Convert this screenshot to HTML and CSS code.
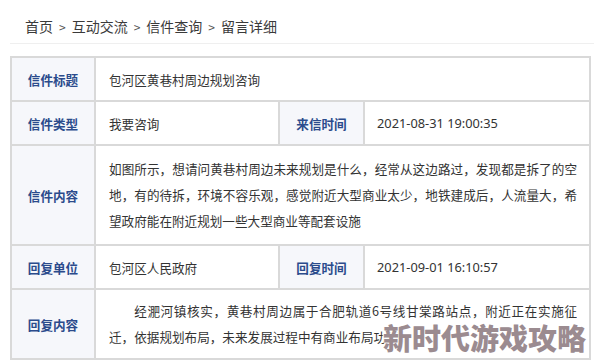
FILE: index.html
```html
<!DOCTYPE html>
<html lang="zh-CN">
<head>
<meta charset="utf-8">
<title>留言详细</title>
<link rel="stylesheet" href="styles.css">
</head>
<body>
<div class="page">
  <nav class="crumbs">
    <span>首页</span><span class="sep">&gt;</span><span>互动交流</span><span class="sep">&gt;</span><span>信件查询</span><span class="sep">&gt;</span><span>留言详细</span>
  </nav>
  <div class="sheet">
    <div class="label">信件标题</div>
    <div class="value span3">包河区黄巷村周边规划咨询</div>

    <div class="label">信件类型</div>
    <div class="value">我要咨询</div>
    <div class="label">来信时间</div>
    <div class="value date">2021-08-31 19:00:35</div>

    <div class="label">信件内容</div>
    <div class="value span3 para">如图所示，想请问黄巷村周边未来规划是什么，经常从这边路过，发现都是拆了的空地，有的待拆，环境不容乐观，感觉附近大型商业太少，地铁建成后，人流量大，希望政府能在附近规划一些大型商业等配套设施</div>

    <div class="label">回复单位</div>
    <div class="value">包河区人民政府</div>
    <div class="label">回复时间</div>
    <div class="value date">2021-09-01 16:10:57</div>

    <div class="label">回复内容</div>
    <div class="value span3 para reply">
      <p class="reply-text">经淝河镇核实，黄巷村周边属于合肥轨道6号线甘棠路站点，附近正在实施征迁，依据规划布局，未来发展过程中有商业布局功能。</p>
      <div class="watermark">新时代游戏攻略</div>
    </div>
  </div>
</div>
</body>
</html>
```
FILE: styles.css
```css
* { box-sizing: border-box; }

html, body {
  margin: 0;
  padding: 0;
  background: #ffffff;
  overflow: hidden;
}

body {
  font-family: "Noto Sans CJK SC", "Noto Sans", sans-serif;
  color: #333333;
}

.page {
  padding-left: 10px;
}

.crumbs {
  height: 44px;
  padding: 16px 0 0 15px;
  font-size: 14px;
  line-height: 20px;
  color: #3a3a3a;
  border-bottom: 1px solid #efefef;
  white-space: nowrap;
}

.crumbs .sep {
  display: inline-block;
  margin: 0 6px;
  color: #555555;
  font-size: 12px;
}

.sheet {
  margin-top: 12px;
  width: 581px;
  display: grid;
  grid-template-columns: 82px 182px 83px 224px;
  grid-template-rows: 42px 42px 98px 42px 68px;
  gap: 2px;
  padding: 2px;
  background: #d9d9d9;
}

.label {
  background: #f6f7fb;
  color: #2b4b8c;
  font-weight: 700;
  font-size: 12.6px;
  display: flex;
  align-items: center;
  justify-content: center;
}

.value {
  background: #ffffff;
  font-size: 12.6px;
  color: #333333;
  display: flex;
  align-items: center;
  padding: 0 12px 0 13px;
}

.span3 {
  grid-column: span 3;
}

.date {
  padding-left: 12px;
  font-family: "Noto Sans", "Noto Sans CJK SC", sans-serif;
  font-size: 12.8px;
}

.para {
  line-height: 26px;
  text-align: justify;
}

.reply {
  position: relative;
}

.reply-text {
  margin: 0;
  text-indent: 2em;
  text-align: justify;
  height: 52px;
  overflow: hidden;
}

.watermark {
  position: absolute;
  right: 3px;
  top: 33px;
  font-size: 29px;
  line-height: 29px;
  font-weight: 900;
  color: #9b8b90;
  white-space: nowrap;
  text-shadow: 0 0 2px #ffffff, 0 0 2px #ffffff, 1px 1px 1px #ffffff, -1px -1px 1px #ffffff;
}
```
